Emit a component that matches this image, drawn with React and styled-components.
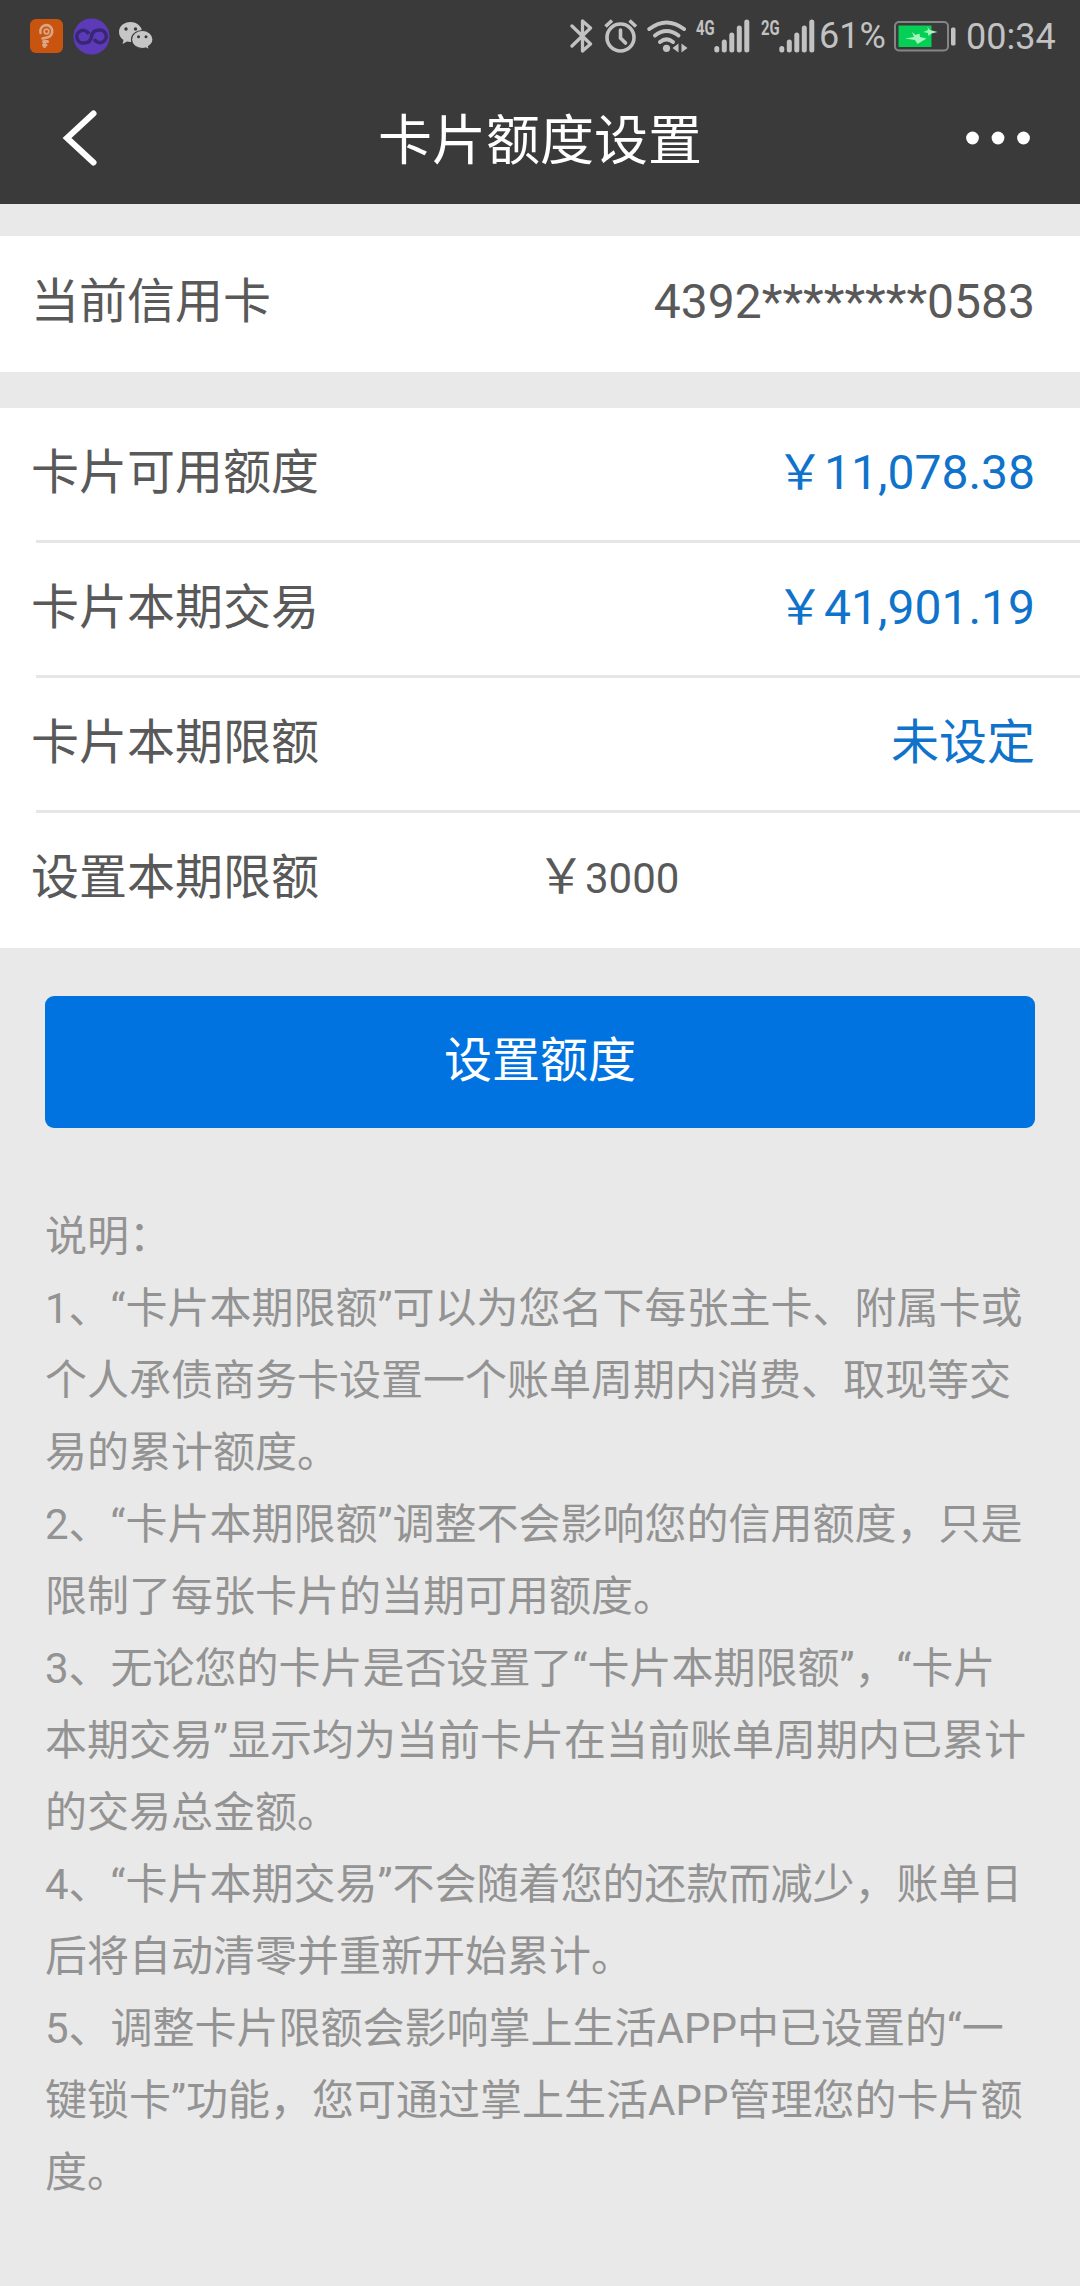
import React from "react";
import styled, { createGlobalStyle } from "styled-components";

const GlobalStyle = createGlobalStyle`
  * { box-sizing: border-box; }
  body {
    margin: 0;
    background: #e9e9e9;
    font-family: Roboto, "Noto Sans CJK SC", sans-serif;
    text-spacing-trim: space-all;
  }
`;

const Screen = styled.div`
  width: 1080px;
  min-height: 2286px;
  background: #e9e9e9;
  overflow: hidden;
`;

const TopArea = styled.header`
  height: 204px;
  background: #3a3a3a;
  color: #fff;
`;

const StatusBar = styled.div`
  display: flex;
  justify-content: space-between;
  height: 72px;
  padding: 0 24px 0 30px;
  color: #c2c2c2;
`;

const StatusGroup = styled.div`
  display: flex;
  align-items: center;
`;

const Glyph = styled.svg`
  flex: none;
  display: block;
  margin-right: ${(p) => p.$after || 0}px;
`;

const StatusText = styled.span`
  width: ${(p) => p.$width}px;
  flex: none;
  font-size: 36px;
  line-height: 40px;
  padding-top: ${(p) => p.$drop || 0}px;
  white-space: nowrap;
`;

const Signal = styled.div`
  display: flex;
  width: 56px;
  height: 40px;
  margin-right: ${(p) => p.$after}px;
`;

const SignalLabel = styled.span`
  flex: none;
  width: 18px;
  font-size: 20px;
  font-weight: 700;
  line-height: 24px;
  transform: scaleX(0.74);
  transform-origin: left center;
`;

const NavBar = styled.div`
  display: grid;
  grid-template-columns: 200px 1fr 200px;
  align-items: center;
  height: 132px;
`;

const Title = styled.h1`
  margin: 0;
  font-size: 54px;
  line-height: 64px;
  font-weight: 400;
  text-align: center;
  padding-top: 8px;
`;

const NavButton = styled.button`
  display: flex;
  justify-content: ${(p) => (p.$end ? "flex-end" : "flex-start")};
  border: 0;
  background: none;
  padding: ${(p) => (p.$end ? "0 49px 0 0" : "0 0 0 62px")};
`;

const Panel = styled.section`
  margin-top: ${(p) => p.$gap}px;
  background: #fff;
`;

const Row = styled.div`
  display: flex;
  align-items: center;
  height: ${(p) => p.$height}px;
  padding: 0 45px ${(p) => p.$lift}px 31px;
  font-size: 48px;
  line-height: 60px;
  color: #595959;
`;

const Divider = styled.hr`
  height: 3px;
  margin: 0 0 0 36px;
  border: 0;
  background: #e6e6e6;
`;

const Label = styled.span`
  width: ${(p) => (p.$fixed ? "506px" : "auto")};
`;

const Value = styled.span`
  margin-left: auto;
  color: ${(p) => (p.$accent ? "#0f73cb" : "inherit")};
`;

const Amount = styled.span`
  display: flex;
  align-items: baseline;
`;

const AmountDigits = styled.span`
  font-size: 42px;
`;

const SubmitButton = styled.button`
  display: block;
  width: 990px;
  height: 132px;
  margin: 48px 45px 0;
  padding: 0 0 12px;
  border: 0;
  border-radius: 9px;
  background: #0073e1;
  color: #fff;
  font: inherit;
  font-size: 48px;
`;

const Notes = styled.section`
  padding: 73px 0 0 45px;
  font-size: 42px;
  line-height: 72px;
  color: #939393;
`;

const NoteLine = styled.div`
  white-space: nowrap;
`;

const SignalBars = ({ label, after }) => (
  <Signal $after={after}>
    <SignalLabel>{label}</SignalLabel>
    <Glyph width="36" height="40" viewBox="18 -2 36 40">
      <path
        d="M20.800 30.500V32M28.300 24V32M35.800 17V32M43.300 10V32M50.800 4V32"
        stroke="#c2c2c2"
        strokeWidth="5"
        strokeLinecap="round"
      />
    </Glyph>
  </Signal>
);

const OrangeBadge = () => (
  <Glyph width="33" height="34" viewBox="0 0 33 34" $after={10}>
    <rect width="33" height="34" rx="6" fill="#c9540f" />
    <g fill="none" stroke="#dba583" strokeLinecap="round" strokeLinejoin="round">
      <path d="M10.500 14A6 6.200 0 1 1 17 18.500L12.500 19.500" strokeWidth="2.600" />
      <circle cx="16.500" cy="12.500" r="2.300" strokeWidth="1.800" />
      <path d="M13.500 22.500H17.500M13.500 26H16M14.500 22V27.500" strokeWidth="3" />
    </g>
  </Glyph>
);

const PurpleBadge = () => (
  <Glyph width="37" height="37" viewBox="0 0 37 37" $after={9}>
    <circle cx="18.500" cy="18.500" r="18" fill="#5d3bb8" />
    <path
      d="M15.800 16A6.300 6.300 0 1 0 12 24.700C17 24.700 18 21.500 18.500 18.500S20 12.300 25 12.300A6.300 6.300 0 1 1 21.200 21"
      fill="none"
      stroke="#382775"
      strokeWidth="3.600"
      strokeLinecap="butt"
    />
  </Glyph>
);

const ChatBubbles = () => (
  <Glyph width="34" height="30" viewBox="0 0 34 30">
    <path d="M11.500 1C5 1 0 5.300 0 11c0 3.400 1.700 6.200 4.500 8L3.500 23l4.500-2.500c1.200.3 2.300.5 3.500.5 6.500 0 11.500-4.500 11.500-10S18 1 11.500 1Z" fill="#c6c6c6" />
    <path d="M23.300 9.500c-6 0-10.800 4-10.800 9s4.800 9 10.800 9c1.200 0 2.400-.2 3.500-.5L30.500 29l-1-3.500c2.700-1.700 4.500-4.100 4.500-7 0-5-4.800-9-10.700-9Z" fill="#c6c6c6" stroke="#3a3a3a" strokeWidth="1.200" />
    <g fill="#3a3a3a">
      <circle cx="7" cy="8" r="1.700" />
      <circle cx="16.500" cy="8" r="1.700" />
      <circle cx="19.500" cy="15.800" r="1.500" />
      <circle cx="27" cy="15.800" r="1.500" />
    </g>
  </Glyph>
);

const Bluetooth = () => (
  <Glyph width="24" height="36" viewBox="0 0 24 36" $after={10}>
    <path d="M2 8L20.500 26L12.500 33V3L20.500 10L2 28" fill="none" stroke="#c2c2c2" strokeWidth="3.300" strokeLinejoin="round" strokeLinecap="round" />
  </Glyph>
);

const Alarm = () => (
  <Glyph width="34" height="36" viewBox="0 0 34 36" $after={9}>
    <g fill="none" stroke="#c2c2c2" strokeWidth="3.600">
      <circle cx="16.500" cy="19.500" r="13.500" />
      <path d="M16.500 12V20L21.500 25" strokeLinecap="round" />
      <path d="M1.500 8.500L8 2.500M25.500 2.500L32 8.500" />
    </g>
  </Glyph>
);

const Wifi = () => (
  <Glyph width="41" height="36" viewBox="0 0 41 36" $after={8}>
    <g fill="none" stroke="#c2c2c2" strokeWidth="4" strokeLinecap="round">
      <path d="M2.300 11Q19.500 -2 37 11" />
      <path d="M8 17.500Q19.500 8.500 31.500 17.500" />
      <path d="M13 24Q19.500 18.800 26 24" />
    </g>
    <circle cx="19.500" cy="30.300" r="3.600" fill="#c2c2c2" />
    <path d="M31.500 25.500V34.500L25.500 30ZM34.500 25.500V34.500L40.500 30Z" fill="#c2c2c2" />
  </Glyph>
);

const Battery = () => (
  <Glyph width="62" height="31" viewBox="0 0 62 31" $after={10}>
    <rect x="1" y="1" width="53" height="28.500" rx="4" fill="none" stroke="#858585" strokeWidth="2" />
    <rect x="4.500" y="4.500" width="33" height="21.500" fill="#05cf54" />
    <rect x="57" y="6.500" width="4.500" height="18" rx="1.500" fill="#c2c2c2" />
    <path d="M18 11L21.500 14L25.500 12.500L26 16L32.500 17.500L23.500 23L21 19L11 17.500L20 16Z" fill="#a3f5be" />
    <path d="M33.500 6L36 9L43.500 11L37.500 12.500L34.500 15L34 12L29.500 11L34 9Z" fill="#a3f5be" />
  </Glyph>
);

const limits = [
  { label: "卡片可用额度", value: "￥11,078.38" },
  { label: "卡片本期交易", value: "￥41,901.19" },
  { label: "卡片本期限额", value: "未设定" },
];

const notes = [
  "说明：",
  "1、“卡片本期限额”可以为您名下每张主卡、附属卡或",
  "个人承债商务卡设置一个账单周期内消费、取现等交",
  "易的累计额度。",
  "2、“卡片本期限额”调整不会影响您的信用额度，只是",
  "限制了每张卡片的当期可用额度。",
  "3、无论您的卡片是否设置了“卡片本期限额”，“卡片",
  "本期交易”显示均为当前卡片在当前账单周期内已累计",
  "的交易总金额。",
  "4、“卡片本期交易”不会随着您的还款而减少，账单日",
  "后将自动清零并重新开始累计。",
  "5、调整卡片限额会影响掌上生活APP中已设置的“一",
  "键锁卡”功能，您可通过掌上生活APP管理您的卡片额",
  "度。",
];

export default function App() {
  return (
    <Screen lang="zh-CN">
      <GlobalStyle />
      <TopArea>
        <StatusBar>
          <StatusGroup>
            <OrangeBadge />
            <PurpleBadge />
            <ChatBubbles />
          </StatusGroup>
          <StatusGroup>
            <Bluetooth />
            <Alarm />
            <Wifi />
            <SignalBars label="4G" after={9} />
            <SignalBars label="2G" after={2} />
            <StatusText $width={75}>61%</StatusText>
            <Battery />
            <StatusText $width={90} $drop={2}>00:34</StatusText>
          </StatusGroup>
        </StatusBar>
        <NavBar>
          <NavButton aria-label="返回">
            <svg width="36" height="58" viewBox="0 0 36 58">
              <path d="M31.500 4.500L5 29L31.500 53.500" fill="none" stroke="#fff" strokeWidth="6" strokeLinecap="round" />
            </svg>
          </NavButton>
          <Title>卡片额度设置</Title>
          <NavButton $end aria-label="更多">
            <svg width="66" height="16" viewBox="0 0 66 16" fill="#fff">
              <circle cx="7.500" cy="8" r="6.400" />
              <circle cx="33" cy="8" r="6.400" />
              <circle cx="58.500" cy="8" r="6.400" />
            </svg>
          </NavButton>
        </NavBar>
      </TopArea>

      <Panel $gap={32}>
        <Row $height={136} $lift={5}>
          <Label>当前信用卡</Label>
          <Value>4392********0583</Value>
        </Row>
      </Panel>

      <Panel $gap={36}>
        {limits.map((item) => (
          <React.Fragment key={item.label}>
            <Row $height={132} $lift={3}>
              <Label>{item.label}</Label>
              <Value $accent>{item.value}</Value>
            </Row>
            <Divider />
          </React.Fragment>
        ))}
        <Row $height={135} $lift={5}>
          <Label $fixed>设置本期限额</Label>
          <Amount>
            ￥<AmountDigits>3000</AmountDigits>
          </Amount>
        </Row>
      </Panel>

      <SubmitButton>设置额度</SubmitButton>

      <Notes>
        {notes.map((line) => (
          <NoteLine key={line}>{line}</NoteLine>
        ))}
      </Notes>
    </Screen>
  );
}
